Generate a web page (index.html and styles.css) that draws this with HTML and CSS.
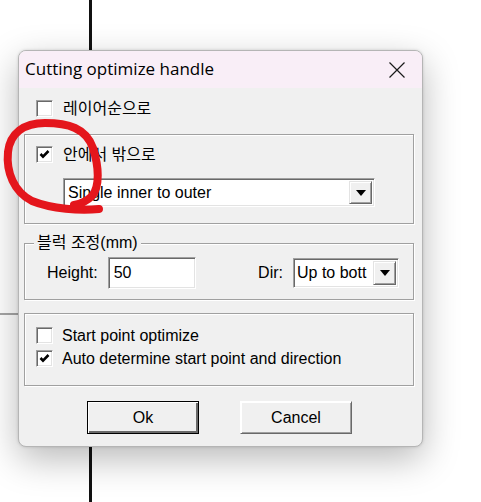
FILE: index.html
```html
<!DOCTYPE html>
<html>
<head>
<meta charset="utf-8">
<link rel="stylesheet" href="styles.css">
</head>
<body>
<div class="canvas-line vline"></div>
<div class="canvas-line hline"></div>
<div class="dialog">
  <div class="titlebar">
    <span class="title">Cutting optimize handle</span>
    <svg class="close" width="16" height="16" viewBox="0 0 16 16"><path d="M0.5 0.5 L15.5 15.5 M15.5 0.5 L0.5 15.5" stroke="#1a1a1a" stroke-width="1.2" fill="none"/></svg>
  </div>
  <div class="body">
    <label class="check top-check"><span class="box"></span><span>레이어순으로</span></label>
    <div class="group g1">
      <label class="check"><span class="box"><svg width="13" height="13" viewBox="0 0 13 13"><polyline points="2.5,6 5,8.6 10.5,3" fill="none" stroke="#000" stroke-width="2.6"/></svg></span><span>안에서 밖으로</span></label>
      <div class="combo wide"><span class="combo-text">Single inner to outer</span><span class="drop"><span class="tri"></span></span></div>
    </div>
    <div class="group g2">
      <span class="legend">블럭 조정(mm)</span>
      <div class="row">
        <div class="field"><span class="lbl">Height:</span><span class="input">50</span></div>
        <div class="field"><span class="lbl">Dir:</span><div class="combo small"><span class="combo-text">Up to bott</span><span class="drop"><span class="tri"></span></span></div></div>
      </div>
    </div>
    <div class="group g3">
      <label class="check"><span class="box"></span><span>Start point optimize</span></label>
      <label class="check"><span class="box"><svg width="13" height="13" viewBox="0 0 13 13"><polyline points="2.5,6 5,8.6 10.5,3" fill="none" stroke="#000" stroke-width="2.6"/></svg></span><span>Auto determine start point and direction</span></label>
    </div>
    <div class="buttons">
      <span class="btn default">Ok</span>
      <span class="btn">Cancel</span>
    </div>
  </div>
</div>
<svg class="annot" width="481" height="502" viewBox="0 0 481 502"><path d="M99 209 C80 211, 52 209, 32 201 C14 192, 6 172, 8 152 C10 133, 24 123, 45 123 C68 123, 86 128, 93 148 C99 167, 100 186, 92 196 C86 202, 80 204, 74 205" fill="none" stroke="#e4161c" stroke-width="8" stroke-linecap="round" stroke-linejoin="round"/></svg>
</body>
</html>
```

FILE: styles.css
```css
html, body {
  margin: 0;
  padding: 0;
  background: #ffffff;
}
body {
  position: relative;
  width: 481px;
  height: 502px;
  overflow: hidden;
  padding: 50px 0 0 18px;
  box-sizing: border-box;
  font-family: "Liberation Sans", "Noto Sans CJK KR", sans-serif;
  font-size: 16px;
  color: #000;
}
.canvas-line {
  position: absolute;
}
.vline {
  left: 89px;
  top: 0;
  width: 3px;
  height: 502px;
  background: #111;
}
.hline {
  left: 0;
  top: 313px;
  width: 18px;
  height: 2px;
  background: #a6a6a6;
}
.dialog {
  position: relative;
  width: 405px;
  height: 397px;
  box-sizing: border-box;
  border: 1px solid #b5b5b5;
  border-radius: 8px;
  background: #f0f0f0;
  overflow: hidden;
  box-shadow: 0 12px 36px rgba(0, 0, 0, 0.28), 0 0 3px rgba(0, 0, 0, 0.15);
  display: flex;
  flex-direction: column;
}
.titlebar {
  height: 37px;
  flex: none;
  background: #f9eef7;
  display: flex;
  align-items: center;
  justify-content: space-between;
  padding: 0 17px 0 6px;
}
.title {
  font-family: "Open Sans", sans-serif;
  font-size: 17px;
  color: #000;
  margin-top: -2px;
}
.close {
  display: block;
}
.body {
  flex: 1;
  padding: 0 0 0 5px;
}
.check {
  display: flex;
  align-items: center;
  height: 17px;
  line-height: 17px;
  white-space: nowrap;
}
.box {
  width: 17px;
  height: 17px;
  box-sizing: border-box;
  background: #fff;
  border: 1px solid;
  border-color: #a0a0a0 #ffffff #ffffff #a0a0a0;
  box-shadow: inset 1px 1px 0 #696969, inset -1px -1px 0 #e3e3e3;
  margin-right: 10px;
  display: flex;
  align-items: center;
  justify-content: center;
  flex: none;
}
.box svg {
  display: block;
}
.top-check {
  margin: 12px 0 0 12px;
}
.group {
  position: relative;
  width: 390px;
  box-sizing: border-box;
  border: 1px solid #a0a0a0;
  box-shadow: inset 1px 1px 0 #ffffff, 1px 1px 0 #ffffff;
}
.g1 {
  margin-top: 17px;
  height: 90px;
  padding: 11px 0 0 11px;
}
.combo {
  display: flex;
  background: #fff;
  box-sizing: border-box;
  border: 1px solid;
  border-color: #a0a0a0 #ffffff #ffffff #a0a0a0;
  box-shadow: inset 1px 1px 0 #696969, inset -1px -1px 0 #e3e3e3;
  padding: 2px;
  overflow: hidden;
}
.combo-text {
  flex: 1;
  overflow: hidden;
  white-space: nowrap;
  display: flex;
  align-items: center;
  padding-left: 2px;
}
.drop {
  flex: none;
  width: 23px;
  background: #f0f0f0;
  box-sizing: border-box;
  border: 1px solid;
  border-color: #e3e3e3 #696969 #696969 #e3e3e3;
  box-shadow: inset 1px 1px 0 #ffffff, inset -1px -1px 0 #a0a0a0;
  display: flex;
  align-items: center;
  justify-content: center;
}
.tri {
  width: 0;
  height: 0;
  border-left: 5px solid transparent;
  border-right: 5px solid transparent;
  border-top: 6px solid #000;
}
.wide {
  margin: 15px 0 0 27px;
  width: 312px;
  height: 29px;
}
.small {
  width: 106px;
  height: 30px;
  padding-left: 1px;
}
.small .combo-text {
  padding-left: 2px;
}
.g2 {
  margin-top: 19px;
  height: 57px;
  padding: 13px 14px 0 22px;
}
.legend {
  position: absolute;
  left: 9px;
  top: -10px;
  padding: 0 3px;
  background: #f0f0f0;
  line-height: 18px;
  white-space: nowrap;
}
.row {
  display: flex;
  justify-content: space-between;
  align-items: center;
  height: 32px;
}
.field {
  display: flex;
  align-items: center;
}
.lbl {
  margin-right: 10px;
}
.input {
  width: 88px;
  height: 32px;
  box-sizing: border-box;
  background: #fff;
  border: 1px solid;
  border-color: #a0a0a0 #ffffff #ffffff #a0a0a0;
  box-shadow: inset 1px 1px 0 #696969, inset -1px -1px 0 #e3e3e3;
  display: flex;
  align-items: center;
  padding-left: 5px;
}
.g3 {
  margin-top: 13px;
  height: 73px;
  padding: 13px 0 0 11px;
  display: flex;
  flex-direction: column;
  gap: 6px;
}
.g3 .box {
  margin-right: 9px;
}
.buttons {
  display: flex;
  gap: 41px;
  padding-left: 63px;
  margin-top: 15px;
}
.btn {
  width: 112px;
  height: 33px;
  box-sizing: border-box;
  background: #f0f0f0;
  border: 1px solid;
  border-color: #ffffff #696969 #696969 #ffffff;
  box-shadow: inset 1px 1px 0 #ffffff, inset -1px -1px 0 #a0a0a0;
  display: flex;
  align-items: center;
  justify-content: center;
}
.btn.default {
  border: 1px solid #000;
  box-shadow: inset 1px 1px 0 #ffffff, inset -2px -2px 0 #696969;
}
.annot {
  position: absolute;
  left: 0;
  top: 0;
  pointer-events: none;
}
```
